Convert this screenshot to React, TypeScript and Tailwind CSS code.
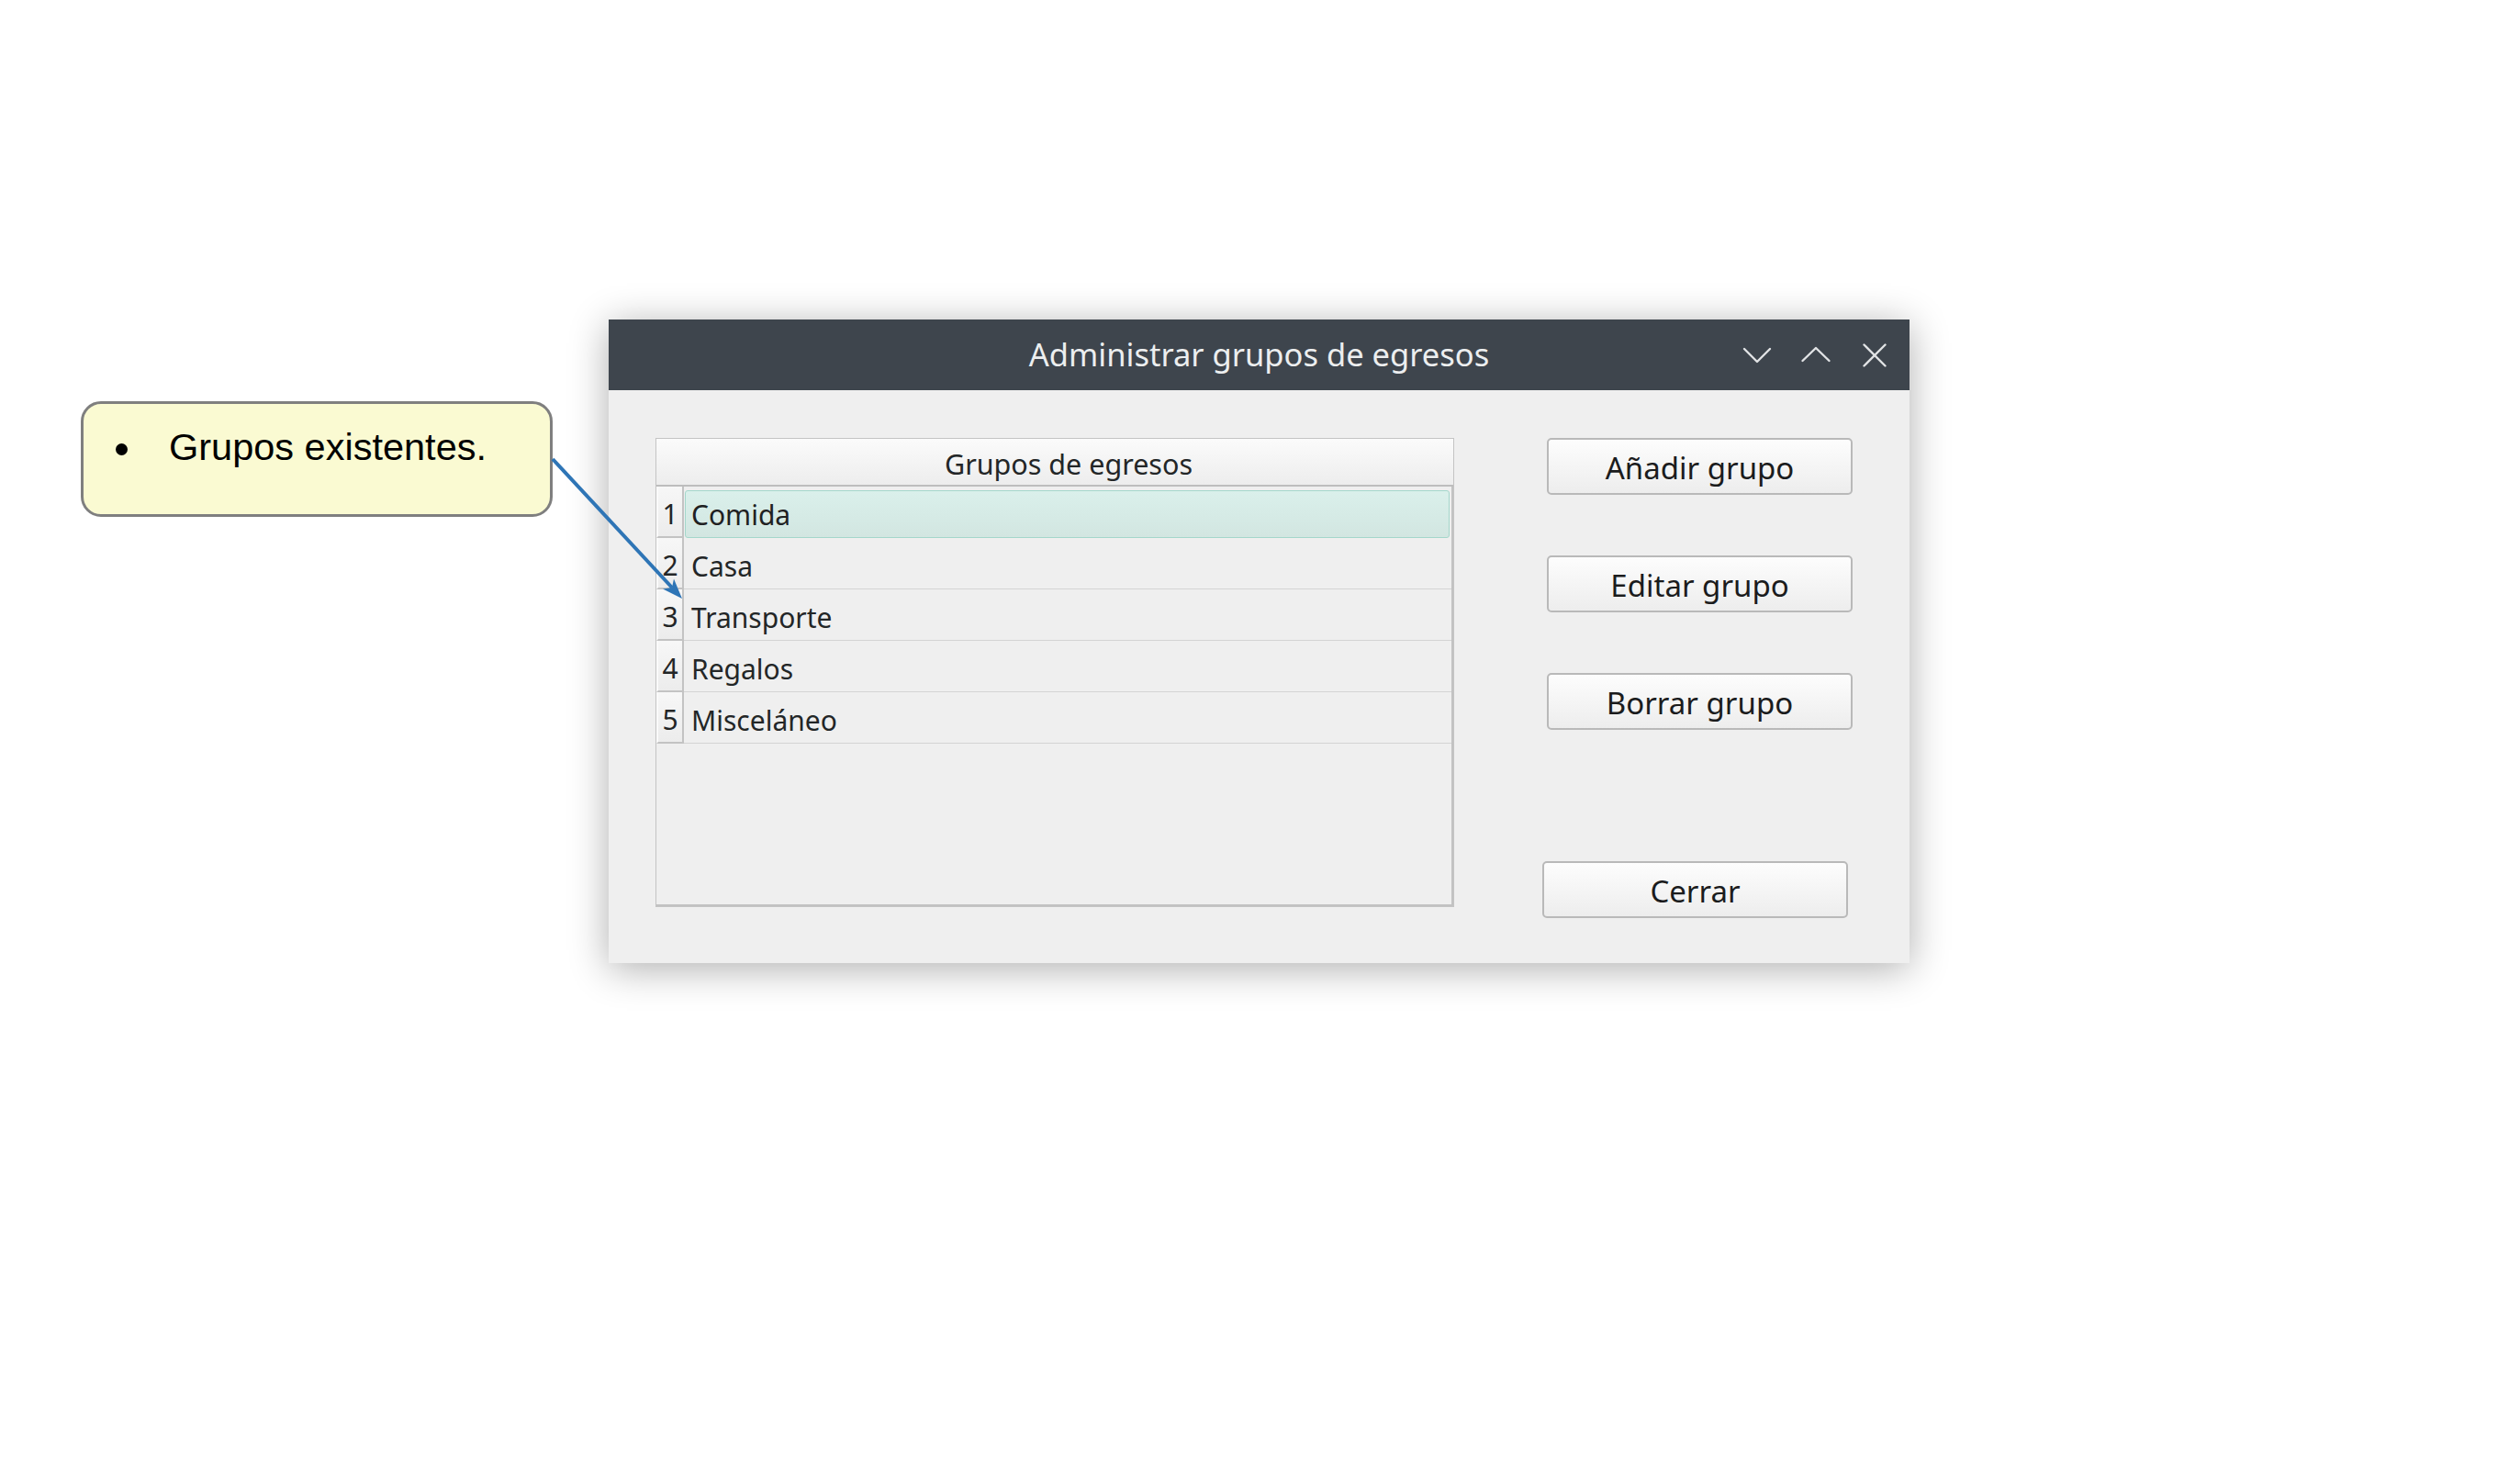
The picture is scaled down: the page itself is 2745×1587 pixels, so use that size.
import React from "react";

const groups = ["Comida", "Casa", "Transporte", "Regalos", "Misceláneo"];
const actions = ["Añadir grupo", "Editar grupo", "Borrar grupo"];

const TitleButtons: React.FC = () => (
  <div className="flex justify-end items-center gap-[24px] pr-[18px]">
    <svg width="40" height="40" viewBox="0 0 40 40" fill="none" stroke="#e1e3e5" strokeWidth="2.4" strokeLinecap="round" strokeLinejoin="round">
      <path d="M6 13 L20 27 L34 13" />
    </svg>
    <svg width="40" height="40" viewBox="0 0 40 40" fill="none" stroke="#e1e3e5" strokeWidth="2.4" strokeLinecap="round" strokeLinejoin="round">
      <path d="M5.5 26 L20 12 L34.5 26" />
    </svg>
    <svg width="40" height="40" viewBox="0 0 40 40" fill="none" stroke="#e1e3e5" strokeWidth="2.4" strokeLinecap="round">
      <path d="M8.5 8.5 L31.5 31.5 M31.5 8.5 L8.5 31.5" />
    </svg>
  </div>
);

const GroupsTable: React.FC = () => (
  <div className="w-[870px] h-[511px] border border-[#c4c4c4] flex flex-col bg-[#efefef]">
    <div className="h-[52px] shrink-0 border-b-2 border-[#bdbdbd] bg-gradient-to-b from-[#fbfbfb] to-[#ededed] flex items-center justify-center pl-[30px] pt-[5px] text-[30.5px] text-[#232627]">
      Grupos de egresos
    </div>
    <div className="flex-1 flex flex-col border-r-2 border-b-2 border-[#c2c2c2]">
      {groups.map((g, i) => (
        <div key={g} className="flex h-[56px] shrink-0">
          <div className="w-[30px] shrink-0 border-r-2 border-b-2 border-[#c3c3c3] border-l-2 border-l-[#fafafa] bg-gradient-to-b from-[#f7f7f7] to-[#ececec] flex items-center justify-center pt-[4px] text-[30px] text-[#232627]">
            {i + 1}
          </div>
          {i === 0 ? (
            <div className="flex-1 flex pt-[4px] pl-[1px] pr-[2px]">
              <div className="flex-1 flex items-center pl-[6px] rounded-[3px] border border-[#a4d7cb] bg-gradient-to-b from-[#daf0eb] to-[#d2e6e1] text-[30px] text-[#1f2122]">
                {g}
              </div>
            </div>
          ) : (
            <div className="flex-1 flex items-center pl-[8px] pt-[5px] border-b border-[#d4d4d4] text-[30px] text-[#232627]">
              {g}
            </div>
          )}
        </div>
      ))}
    </div>
  </div>
);

const DialogButton: React.FC<{ label: string; className?: string }> = ({ label, className }) => (
  <button
    type="button"
    className={
      "w-[333px] h-[62px] rounded-[5px] border-2 border-[#b9b9b9] bg-gradient-to-b from-[#fdfdfd] to-[#ededed] text-[33px] text-[#1b1c1d] flex items-center justify-center pt-[3px] " +
      (className || "")
    }
  >
    {label}
  </button>
);

const App: React.FC = () => {
  return (
    <div className="relative w-[2745px] h-[1587px] bg-white overflow-hidden font-['Noto_Sans',sans-serif]">
      <div className="flex items-start pl-[88px] pt-[348px]">
        {/* nota */}
        <div className="mt-[89px] w-[514px] h-[126px] shrink-0 rounded-[22px] border-[3px] border-[#7f7f7f] bg-[#fafad2] flex items-start pt-[23px] font-['Liberation_Sans',Arial,sans-serif] text-[41.5px] leading-[47px] text-black">
          <span className="ml-[35px] mt-[20px] w-[13px] h-[13px] rounded-full bg-black shrink-0" />
          <span className="ml-[45px]">Grupos existentes.</span>
        </div>

        {/* ventana */}
        <div className="ml-[61px] w-[1417px] h-[701px] shrink-0 bg-[#efefef] shadow-[0_6px_40px_rgba(0,0,0,0.32)] flex flex-col">
          <div className="h-[77px] shrink-0 bg-[#3e454d] grid grid-cols-[1fr_auto_1fr] items-center">
            <div />
            <span className="text-[34.5px] leading-none text-[#eceeef]">Administrar grupos de egresos</span>
            <TitleButtons />
          </div>
          <div className="flex pl-[51px] pt-[52px]">
            <GroupsTable />
            <div className="ml-[101px] flex flex-col">
              {actions.map((a, i) => (
                <DialogButton key={a} label={a} className={i > 0 ? "mt-[66px]" : ""} />
              ))}
              <DialogButton label="Cerrar" className="mt-[143px] -ml-[5px]" />
            </div>
          </div>
        </div>
      </div>

      <svg className="absolute left-0 top-0 pointer-events-none" width="2745" height="1587">
        <line x1="602" y1="500" x2="732" y2="640" stroke="#2e75b6" strokeWidth="4" />
        <polygon points="743,652 722,641.5 732,640 734,630.5" fill="#2e75b6" />
      </svg>
    </div>
  );
};

export default App;
